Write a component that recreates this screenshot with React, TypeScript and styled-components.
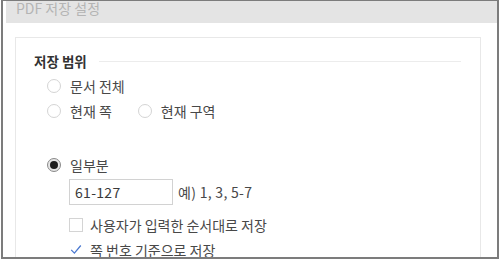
import React from 'react';
import styled, { createGlobalStyle } from 'styled-components';

const GlobalStyle = createGlobalStyle`
  html, body {
    margin: 0;
    padding: 0;
    background: #ffffff;
  }
  body {
    font-family: 'Noto Sans CJK KR', 'Noto Sans', sans-serif;
  }
`;

const Page = styled.div`
  width: 500px;
  height: 261px;
  overflow: hidden;
  padding-left: 1px;
  box-sizing: border-box;
`;

const Frame = styled.div`
  width: 498px;
  height: 259px;
  box-sizing: border-box;
  border: 2px solid #7c7c7c;
  border-top-width: 1px;
  overflow: hidden;
  background: #ffffff;
`;

const TitleBar = styled.div`
  margin-left: 3px;
  height: 22px;
  background: #e4e4e4;
  padding-left: 10px;
  font-size: 14px;
  line-height: 15px;
  color: #b4b4b4;
`;

const Panel = styled.section`
  margin: 14px 0 0 12px;
  width: 466px;
  height: 260px;
  box-sizing: border-box;
  border: 1px solid #e8e8e8;
  padding: 13px 19px 0 18px;
`;

const SectionHeader = styled.div`
  display: flex;
  align-items: center;
  gap: 12px;
  height: 20px;
  font-size: 13.5px;
  font-weight: 700;
  color: #333333;
`;

const HeaderLine = styled.div`
  flex: 1;
  height: 1px;
  background: #ececec;
`;

const Options = styled.div`
  display: flex;
  flex-direction: column;
  padding-left: 13px;
  margin-top: 2px;
`;

const Row = styled.div<{ $gap?: number }>`
  display: flex;
  align-items: center;
  gap: 26px;
  height: 25px;
  margin-top: ${p => p.$gap ?? 0}px;
`;

const Choice = styled.label`
  display: flex;
  align-items: center;
  gap: 9px;
  font-size: 14px;
  color: #484848;
`;

const Radio = styled.span<{ $checked?: boolean }>`
  width: 14px;
  height: 14px;
  box-sizing: border-box;
  border-radius: 50%;
  border: 1px solid ${p => (p.$checked ? '#8a8a8a' : '#d4d4d4')};
  background: ${p => (p.$checked ? '#e6e6e6' : '#ffffff')};
  display: flex;
  align-items: center;
  justify-content: center;
  &::after {
    content: '';
    width: 8px;
    height: 8px;
    border-radius: 50%;
    background: #1e1e1e;
    display: ${p => (p.$checked ? 'block' : 'none')};
  }
`;

const Sub = styled.div`
  display: flex;
  flex-direction: column;
  padding-left: 22px;
`;

const RangeRow = styled.div`
  display: flex;
  align-items: center;
  gap: 5px;
  margin-top: 2px;
`;

const RangeInput = styled.div`
  width: 104px;
  height: 26px;
  box-sizing: border-box;
  border: 1px solid #d2d2d2;
  padding-left: 5px;
  font-size: 14px;
  line-height: 24px;
  letter-spacing: 0.3px;
  color: #3a3a3a;
`;

const Hint = styled.span`
  font-size: 14px;
  letter-spacing: 0.3px;
  color: #484848;
`;

const CheckRow = styled.label<{ $gap?: number }>`
  display: flex;
  align-items: center;
  gap: 7px;
  height: 25px;
  margin-top: ${p => p.$gap ?? 0}px;
  font-size: 14px;
  color: #484848;
`;

const Box = styled.span<{ $checked?: boolean }>`
  width: 14px;
  height: 14px;
  box-sizing: border-box;
  border: 1px solid ${p => (p.$checked ? '#ffffff' : '#d4d4d4')};
  display: flex;
  align-items: center;
  justify-content: center;
`;

const Check = () => (
  <svg width="15" height="13" viewBox="0 0 15 13">
    <path d="M1.5 7 L5.5 11 L13.5 1.5" fill="none" stroke="#4a78d0" strokeWidth="1.6" />
  </svg>
);

export default function App() {
  return (
    <Page>
      <GlobalStyle />
      <Frame>
        <TitleBar>PDF 저장 설정</TitleBar>
        <Panel>
          <SectionHeader>
            저장 범위
            <HeaderLine />
          </SectionHeader>
          <Options>
            <Row>
              <Choice>
                <Radio />
                문서 전체
              </Choice>
            </Row>
            <Row>
              <Choice>
                <Radio />
                현재 쪽
              </Choice>
              <Choice>
                <Radio />
                현재 구역
              </Choice>
            </Row>
            <Row $gap={29}>
              <Choice>
                <Radio $checked />
                일부분
              </Choice>
            </Row>
            <Sub>
              <RangeRow>
                <RangeInput>61-127</RangeInput>
                <Hint>예) 1, 3, 5-7</Hint>
              </RangeRow>
              <CheckRow $gap={7}>
                <Box />
                사용자가 입력한 순서대로 저장
              </CheckRow>
              <CheckRow>
                <Box $checked>
                  <Check />
                </Box>
                쪽 번호 기준으로 저장
              </CheckRow>
            </Sub>
          </Options>
        </Panel>
      </Frame>
    </Page>
  );
}
